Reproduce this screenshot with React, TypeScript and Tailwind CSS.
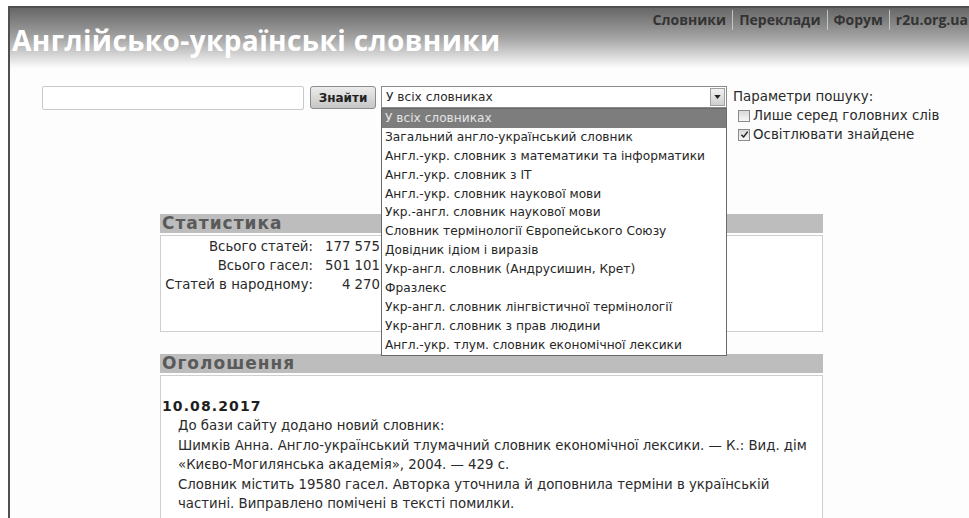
import { useState } from 'react';

const dictionaries = [
  'У всіх словниках',
  'Загальний англо-український словник',
  'Англ.-укр. словник з математики та інформатики',
  'Англ.-укр. словник з IT',
  'Англ.-укр. словник наукової мови',
  'Укр.-англ. словник наукової мови',
  'Словник термінології Європейського Союзу',
  'Довідник ідіом і виразів',
  'Укр-англ. словник (Андрусишин, Крет)',
  'Фразлекс',
  'Укр-англ. словник лінгвістичної термінології',
  'Укр-англ. словник з прав людини',
  'Англ.-укр. тлум. словник економічної лексики',
];

const navLinks = ['Словники', 'Переклади', 'Форум', 'r2u.org.ua'];

const stats = [
  { label: 'Всього статей:', value: '177 575' },
  { label: 'Всього гасел:', value: '501 101' },
  { label: 'Статей в народному:', value: '4 270' },
];

function Checkbox({ checked }: { checked?: boolean }) {
  return (
    <span className="flex h-[12px] w-[12px] shrink-0 items-center justify-center border border-[#8a8a8a] bg-gradient-to-b from-[#d9d9d9] to-[#f6f6f6]">
      {checked && (
        <svg viewBox="0 0 10 10" className="h-[9px] w-[9px]">
          <path d="M1.5 5.2 L4 7.8 L8.6 1.8" fill="none" stroke="#222" strokeWidth="1.6" />
        </svg>
      )}
    </span>
  );
}

function PanelHeader({ title }: { title: string }) {
  return (
    <div className="h-[19px] overflow-hidden bg-[#bdbdbd] pl-[2px] text-[17px] font-bold leading-[19px] tracking-[1px] text-[#5a5a5a]">
      {title}
    </div>
  );
}

export default function App() {
  const [selected] = useState(0);

  return (
    <div className="h-[518px] w-full overflow-hidden bg-white pl-[8px] pt-[6px] font-['DejaVu_Sans',sans-serif] text-[#2a2a2a]">
      <div className="h-full border-l-2 border-t-2 border-[#505050] bg-[#fdfdfd]">
        <header className="flex h-[60px] items-start justify-between bg-gradient-to-b from-[#676767] via-[#a4a4a4] to-[#fdfdfd]">
          <h1 className="pl-[2px] pt-[15px] font-['Open_Sans',sans-serif] text-[28px] font-bold leading-[34px] tracking-[0.4px] text-white">
            Англійсько-українські словники
          </h1>
          <nav className="flex pt-[2px] font-['Open_Sans',sans-serif] text-[14px] font-bold leading-[20px] text-[#333]">
            {navLinks.map((link, i) => (
              <a
                key={link}
                href="#"
                className={
                  (i > 0 ? 'border-l border-[#c4c4c4] pl-[6px] ' : '') +
                  (i < navLinks.length - 1 ? 'pr-[6px]' : 'pr-[1px]')
                }
              >
                {link}
              </a>
            ))}
          </nav>
        </header>

        <div className="mt-[18px] flex items-start">
          <input
            type="text"
            className="ml-[32px] h-[24px] w-[262px] rounded-[2px] border border-[#c9c9c9] bg-white"
          />
          <button className="ml-[6px] h-[23px] w-[66px] rounded-[3px] border border-[#8c8c8c] bg-gradient-to-b from-[#ececec] to-[#c6c6c6] text-[12px] font-bold text-[#222]">
            Знайти
          </button>

          <div className="relative ml-[5px] w-[346px]">
            <div className="flex h-[22px] items-center justify-between border border-[#8a8a8a] bg-white pl-[4px] text-[12.2px]">
              <span>{dictionaries[selected]}</span>
              <span className="mr-[1px] flex h-[18px] w-[15px] items-center justify-center border border-[#a0a0a0] bg-gradient-to-b from-[#f2f2f2] to-[#cfcfcf]">
                <svg viewBox="0 0 8 5" className="h-[4px] w-[7px]">
                  <path d="M0 0 H8 L4 5 Z" fill="#222" />
                </svg>
              </span>
            </div>
            <ul className="absolute left-0 top-[22px] z-10 w-[346px] border border-[#6a6a6a] bg-white text-[12.2px]">
              {dictionaries.map((d, i) => (
                <li
                  key={d}
                  className={
                    'h-[18.9px] pl-[3px] leading-[18.9px] ' +
                    (i === selected ? 'bg-[#7d7d7d] text-[#e4e4e4]' : 'text-[#262626]')
                  }
                >
                  {d}
                </li>
              ))}
            </ul>
          </div>

          <div className="ml-[6px] text-[13.4px] leading-[19px]">
            <div className="pt-[1px]">Параметри пошуку:</div>
            <label className="flex items-center gap-[3px] pl-[5px]">
              <Checkbox />
              Лише серед головних слів
            </label>
            <label className="flex items-center gap-[3px] pl-[5px]">
              <Checkbox checked />
              Освітлювати знайдене
            </label>
          </div>
        </div>

        <div className="ml-[150px] mt-[70px] w-[663px]">
          <section>
            <PanelHeader title="Статистика" />
            <div className="mt-[2px] h-[97px] border border-[#cfcfcf] bg-white pt-[1px] text-[13.3px]">
              {stats.map((s) => (
                <div key={s.label} className="flex h-[19px] items-center whitespace-nowrap leading-[19px]">
                  <span className="w-[152px] shrink-0 text-right">{s.label}</span>
                  <span className="w-[67px] shrink-0 text-right">{s.value}</span>
                </div>
              ))}
            </div>
          </section>

          <section className="mt-[22px]">
            <PanelHeader title="Оголошення" />
            <div className="mt-[2px] h-[200px] border border-[#cfcfcf] bg-white pt-[20px] text-[13.3px]">
              <div className="pl-[1px] text-[14px] font-bold leading-[20px] tracking-[1.1px] text-[#1e1e1e]">
                10.08.2017
              </div>
              <p className="pl-[17px] leading-[19.6px]">
                До бази сайту додано новий словник:
                <br />
                Шимків Анна. Англо-український тлумачний словник економічної лексики. — К.: Вид. дім
                <br />
                «Києво-Могилянська академія», 2004. — 429 с.
                <br />
                Словник містить 19580 гасел. Авторка уточнила й доповнила терміни в українській
                <br />
                частині. Виправлено помічені в тексті помилки.
              </p>
            </div>
          </section>
        </div>
      </div>
    </div>
  );
}
